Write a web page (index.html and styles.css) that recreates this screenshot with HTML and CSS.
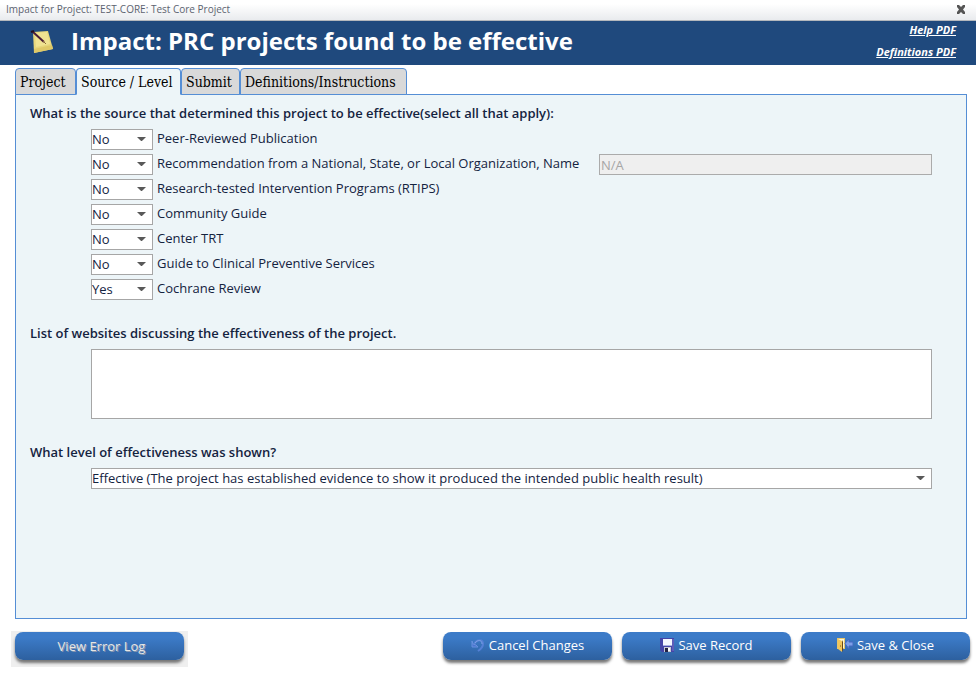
FILE: index.html
```html
<!DOCTYPE html>
<html lang="en">
<head>
<meta charset="utf-8">
<meta name="viewport" content="width=device-width, initial-scale=1">
<title>Impact for Project: TEST-CORE: Test Core Project</title>
<link rel="stylesheet" href="styles.css">
</head>
<body>
<div class="titlebar">
  <span>Impact for Project: TEST-CORE: Test Core Project</span>
  <button class="close" type="button" aria-label="Close"><svg width="10" height="9" viewBox="0 0 10 9"><path d="M1 0h2l2 2 2-2h2v2L7 4.500l2 2.500v2H7L5 7 3 9H1V7l2-2.500L1 2z" fill="#555"/></svg></button>
</div>
<header class="header">
  <svg class="note" width="24" height="24" viewBox="0 0 24 24">
    <path d="M3 2l15-1 5 18-19 4z" fill="#e7d77c"/>
    <path d="M5 3l12-1 3 12-14 3z" fill="#f0e391"/>
    <path d="M4 23l19-4-1-4-18 4z" fill="#dfc968"/>
    <path d="M3 2l11 10" stroke="#4a1c38" stroke-width="2"/>
    <path d="M1 2l3-1" stroke="#240f22" stroke-width="2"/>
    <path d="M13 11l3 3" stroke="#8b6a35" stroke-width="1"/>
  </svg>
  <h1>Impact: PRC projects found to be effective</h1>
  <nav class="help">
    <a href="#help">Help PDF</a>
    <a href="#definitions">Definitions PDF</a>
  </nav>
</header>
<main class="main">
  <div class="tabs" role="tablist">
    <button type="button" role="tab" class="tab tab-project">Project</button>
    <button type="button" role="tab" class="tab tab-source active" aria-selected="true">Source / Level</button>
    <button type="button" role="tab" class="tab tab-submit">Submit</button>
    <button type="button" role="tab" class="tab tab-definitions">Definitions/Instructions</button>
  </div>
  <section class="panel">
    <h2>What is the source that determined this project to be effective(select all that apply):</h2>
    <div class="sources">
      <div class="row"><span class="drop"><select id="s1"><option>No</option><option>Yes</option></select></span><label for="s1">Peer-Reviewed Publication</label></div>
      <div class="row"><span class="drop"><select id="s2"><option>No</option><option>Yes</option></select></span><label class="org" for="s2">Recommendation from a National, State, or Local Organization, Name</label><input class="name" type="text" value="N/A" aria-label="Organization name" disabled></div>
      <div class="row"><span class="drop"><select id="s3"><option>No</option><option>Yes</option></select></span><label for="s3">Research-tested Intervention Programs (RTIPS)</label></div>
      <div class="row"><span class="drop"><select id="s4"><option>No</option><option>Yes</option></select></span><label for="s4">Community Guide</label></div>
      <div class="row"><span class="drop"><select id="s5"><option>No</option><option>Yes</option></select></span><label for="s5">Center TRT</label></div>
      <div class="row"><span class="drop"><select id="s6"><option>No</option><option>Yes</option></select></span><label for="s6">Guide to Clinical Preventive Services</label></div>
      <div class="row"><span class="drop"><select id="s7"><option>No</option><option selected>Yes</option></select></span><label for="s7">Cochrane Review</label></div>
    </div>
    <h2><label for="sites">List of websites discussing the effectiveness of the project.</label></h2>
    <textarea id="sites" class="sites"></textarea>
    <h2><label for="level">What level of effectiveness was shown?</label></h2>
    <span class="drop drop-wide"><select id="level"><option>Effective (The project has established evidence to show it produced the intended public health result)</option></select></span>
  </section>
</main>
<footer class="footer">
  <div class="log"><button class="btn btn-log" type="button">View Error Log</button></div>
  <div class="actions">
    <button class="btn" type="button"><svg width="14" height="14" viewBox="0 0 14 14"><path d="M3 6c3-5 9-5 9 0 0 3-2 5-5 7" fill="none" stroke="#5580d5" stroke-width="2"/><path d="M1 3v6h6L5 7 2 6z" fill="#4a74cf" stroke="#6790dd" stroke-width="1"/><path d="M4 5c3-4 7-3 7 1" fill="none" stroke="#7da2e5"/></svg>Cancel Changes</button>
    <button class="btn" type="button"><svg width="14" height="14" viewBox="0 0 14 14"><path d="M0 0h14v14H2l-2-2z" fill="#4545a8"/><path d="M3 1h9v6H3z" fill="#f4f6ff"/><path d="M3 7h9v1H3z" fill="#a9b0e1"/><path d="M4 9h7v5H4z" fill="#c8c8d4"/><path d="M5 10h3v4H5z" fill="#222244"/><path d="M8 10h2v3H8z" fill="#fff"/><path d="M13 1v12" stroke="#7777c9"/></svg>Save Record</button>
    <button class="btn" type="button"><svg width="16" height="14" viewBox="0 0 16 14"><path d="M0 0h8v11H0z" fill="#e6c56c"/><path d="M1 1h6v9H1z" fill="#fff7cf"/><path d="M1 1l4 2v11l-4-3z" fill="#f2c65a"/><path d="M5 4l1-2v10l-1 2z" fill="#674717"/><path d="M3 8h1" stroke="#805518"/><path d="M8 5.500L12 1v3h4v4h-4v3z" fill="#7d9fe8" stroke="#4568c0"/></svg>Save &amp; Close</button>
  </div>
</footer>
</body>
</html>
```

FILE: styles.css
```css
* { box-sizing: border-box; }

body {
  margin: 0;
  min-height: 100vh;
  display: flex;
  flex-direction: column;
  background: #fff;
  color: #14233f;
  font: 13px/20px "Open Sans", "Noto Sans", sans-serif;
}

button, select, input, textarea { font: inherit; color: inherit; }

.titlebar {
  display: flex;
  justify-content: space-between;
  align-items: center;
  height: 21px;
  padding: 0 10px 2px 6px;
  border-bottom: 1px solid #b4b8bd;
  background: linear-gradient(#fff 20%, #e9ebee);
  color: #5c6370;
  font-size: 10px;
  line-height: 18px;
}

.close { display: flex; padding: 0; border: 0; background: none; }

.header {
  display: flex;
  align-items: flex-start;
  height: 44px;
  padding: 0 20px 0 30px;
  background: #1f497d;
  color: #fff;
}

.note { flex: none; margin: 9px 17px 0 0; }

h1 {
  flex: 1;
  margin: 0;
  font-size: 24px;
  font-weight: 700;
  line-height: 40px;
  white-space: nowrap;
}

.help {
  display: flex;
  flex-direction: column;
  align-items: flex-end;
  font-size: 11px;
  line-height: 22px;
  font-weight: 700;
  font-style: italic;
  margin-top: -2px;
}

.help a { color: #fff; }

.main {
  flex: 1;
  display: flex;
  flex-direction: column;
  padding: 3px 9px 0 15px;
}

.tabs { display: flex; position: relative; }

.tab {
  height: 27px;
  padding: 1px 4px 0;
  border: 1px solid #558ed5;
  border-radius: 4px 4px 0 0;
  margin-bottom: -1px;
  background: #d9d9d9;
  color: #000;
  font: 14px/24px "DejaVu Serif Condensed", "DejaVu Serif", serif;
  text-align: left;
  white-space: nowrap;
}

.tab.active { border-bottom-color: #edf5f8; background: #edf5f8; }
.tab-project { width: 61px; }
.tab-source { width: 105px; }
.tab-submit { width: 59px; }
.tab-definitions { width: 167px; }

.panel {
  flex: 1;
  padding: 8px 34px 20px 14px;
  border: 1px solid #558ed5;
  background: #edf5f8;
}

h2 { margin: 0; font-size: 13px; font-weight: 600; line-height: 20px; }

.sources { margin: 6px 0 19px 61px; }

.row { display: flex; height: 25px; }

.row label { margin-left: 4px; line-height: 18px; white-space: nowrap; }
.row .org { width: 442px; }

.drop { position: relative; display: block; flex: none; width: 62px; height: 21px; }

.drop::after {
  content: "";
  position: absolute;
  right: 7px;
  top: 8px;
  width: 9px;
  height: 4px;
  background: #595959;
  clip-path: polygon(0 0, 100% 0, 55% 100%, 45% 100%);
  pointer-events: none;
}

.drop select {
  appearance: none;
  width: 100%;
  height: 21px;
  padding: 0 18px 0 0;
  border: 1px solid #a6a6a6;
  border-radius: 0;
  background: #fff;
  line-height: 19px;
}

.name {
  flex: 1;
  min-width: 0;
  height: 21px;
  padding: 0 1px;
  border: 1px solid #ababab;
  background: #efefef;
  color: #a6a6a6;
}

.sites {
  display: block;
  width: calc(100% - 61px);
  height: 70px;
  margin: 6px 0 23px 61px;
  border: 1px solid #a6a6a6;
  background: #fff;
  resize: none;
}

.drop-wide { width: auto; margin: 6px 0 0 61px; }

.footer {
  display: flex;
  justify-content: space-between;
  align-items: flex-start;
  padding: 12px 6px 15px 11px;
}

.log { padding: 1px 4px 7px; background: #efefef; }

.actions { display: flex; gap: 10px; padding-top: 1px; }

.btn {
  display: flex;
  justify-content: center;
  align-items: center;
  gap: 4px;
  width: 169px;
  height: 28px;
  padding: 0 0 2px;
  border: 0;
  border-radius: 8px;
  background: linear-gradient(#3c7bc8 20%, #2d609f);
  box-shadow: 0 3px 3px #777;
  color: #fff;
}

.btn-log { padding: 0 0 0 4px; color: #e6e6e6; text-shadow: 1px 1px 0 #8797b0; }
```
